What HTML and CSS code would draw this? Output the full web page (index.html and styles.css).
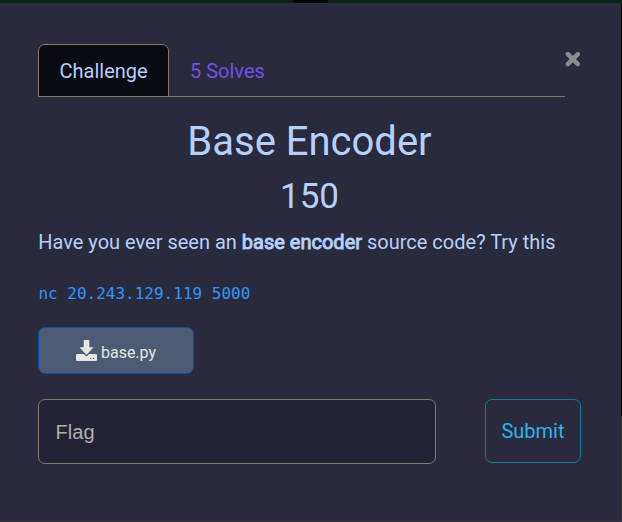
FILE: index.html
```html
<!DOCTYPE html>
<html lang="en">
<head>
<meta charset="utf-8">
<title>Base Encoder</title>
<link rel="stylesheet" href="styles.css">
</head>
<body>
<main class="modal">
  <header class="modal-head">
    <nav class="tabs">
      <a class="tab active">Challenge</a>
      <a class="tab">5 Solves</a>
    </nav>
    <button class="close" aria-label="Close">
      <svg width="16" height="16" viewBox="0 0 16 16"><path d="M2.8 3.1 12.8 13.1M12.8 3.1 2.8 13.1" fill="none" stroke="currentColor" stroke-width="4.4" stroke-linecap="round"/></svg>
    </button>
  </header>
  <h2 class="name">Base Encoder</h2>
  <h3 class="value">150</h3>
  <p class="desc">Have you ever seen an <strong>base encoder</strong> source code? Try this</p>
  <code class="command">nc 20.243.129.119 5000</code>
  <a class="file">
    <svg class="file-icon" width="21" height="21" viewBox="0 0 21 21" fill="currentColor">
      <path d="M7.7 0.7Q7.7 0 8.4 0H12.6Q13.3 0 13.3 0.7V7.3H16.6Q17.6 7.3 16.9 8.1L11.1 14.3Q10.5 14.9 9.9 14.3L4.1 8.1Q3.4 7.3 4.4 7.3H7.7Z"/>
      <path fill-rule="evenodd" d="M1 14H7.8L9.6 15.8Q10.5 16.6 11.4 15.8L13.2 14H20Q21 14 21 15V20Q21 21 20 21H1Q0 21 0 20V15Q0 14 1 14ZM14.2 18V19H15.4V18ZM17 18V19H18.2V18Z"/>
    </svg>
    <span>base.py</span>
  </a>
  <form class="answer">
    <input class="flag" type="text" placeholder="Flag">
    <button class="submit" type="button">Submit</button>
  </form>
</main>
</body>
</html>
```
FILE: styles.css
```css
* { box-sizing: border-box; }

body {
  margin: 0;
  height: 522px;
  overflow: hidden;
  padding: 3px 1px 1px 0;
  background: linear-gradient(90deg, #092313 292px, #030408 295px, #030408 328px, #092313 328px) top / 100% 3px no-repeat,
    linear-gradient(#050507 416px, #363438 416px);
  font-family: Roboto, sans-serif;
  font-size: 20px;
  line-height: 30px;
  color: #b5d0ff;
}

.modal {
  height: 518px;
  padding: 41px 40px 0 38px;
  background: #292a3b;
}

.modal-head {
  display: flex;
  align-items: flex-start;
  height: 53px;
}

.tabs {
  display: flex;
  width: 527px;
  height: 53px;
  border-bottom: 1px solid #857a68;
}

.tab {
  height: 53px;
  padding: 11px 20px;
  border: 1px solid transparent;
  color: #7350e8;
}

.tab.active {
  width: 131px;
  padding-left: 20.5px;
  padding-right: 0;
  border-color: #857a68;
  border-radius: 7px 7px 0 0;
  background: #090a12;
  color: #b5d0ff;
}

.close {
  flex: none;
  display: flex;
  margin: 7px 0 0;
  padding: 0;
  border: 0;
  background: none;
  color: #8c8c92;
}

.name, .value {
  margin: 0;
  font-weight: 400;
  text-align: center;
}

.name {
  margin-top: 21px;
  font-size: 40px;
  line-height: 48px;
}

.value {
  margin-top: 10px;
  font-size: 35px;
  line-height: 42px;
}

.desc {
  margin: 9px 0 0;
  padding-left: 0.2px;
  white-space: nowrap;
}

.desc strong {
  font-weight: 400;
  -webkit-text-stroke: 0.9px currentColor;
}

.command {
  display: block;
  margin-top: 22px;
  padding-left: 0.4px;
  font-family: "DejaVu Sans Mono", monospace;
  font-size: 16px;
  color: #2f96ff;
}

.file {
  display: flex;
  align-items: center;
  justify-content: center;
  gap: 4px;
  width: 156px;
  height: 47px;
  margin-top: 18px;
  border: 1px solid #104da5;
  border-radius: 7px;
  background: #4a5b73;
  color: #e8e6e3;
  font-size: 16px;
}

.file-icon { margin-bottom: 1px; }

.file span { padding-top: 5px; }

.answer {
  display: flex;
  justify-content: space-between;
  margin-top: 25px;
}

.flag {
  width: 398px;
  height: 65px;
  padding: 2px 16.6px 0;
  border: 1px solid #857a68;
  border-radius: 7px;
  background: #212234;
  color: #b5aea4;
  font: 20px "Liberation Sans", sans-serif;
}

.flag::placeholder { color: #b5aea4; }

.submit {
  width: 96px;
  height: 64px;
  padding: 0;
  border: 1px solid #137aa5;
  border-radius: 7px;
  background: none;
  color: #2fb3ef;
  font: 20px Roboto, sans-serif;
}
```
